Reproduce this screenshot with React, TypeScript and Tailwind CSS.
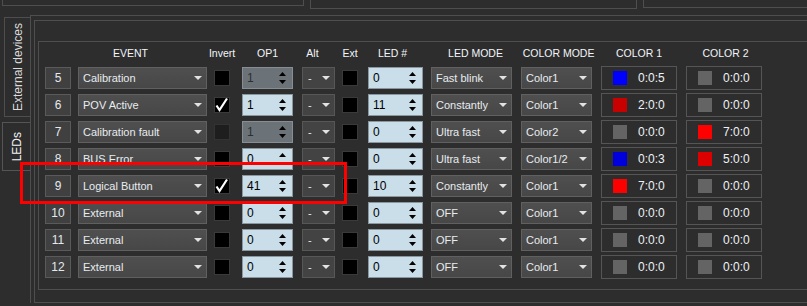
import React from "react";

type Row = {
  n: number;
  ev: string;
  inv: "off" | "on" | "dis";
  op: string;
  opDis?: boolean;
  opUp?: boolean;
  led: string;
  mode: string;
  cm: string;
  c1: string;
  t1: string;
  c2: string;
  t2: string;
};

const rows: Row[] = [
  { n: 5, ev: "Calibration", inv: "off", op: "1", opDis: true, led: "0", mode: "Fast blink", cm: "Color1", c1: "bg-[#0000ff]", t1: "0:0:5", c2: "bg-[#646464]", t2: "0:0:0" },
  { n: 6, ev: "POV Active", inv: "on", op: "1", led: "11", mode: "Constantly", cm: "Color1", c1: "bg-[#c80000]", t1: "2:0:0", c2: "bg-[#646464]", t2: "0:0:0" },
  { n: 7, ev: "Calibration fault", inv: "dis", op: "1", opDis: true, led: "0", mode: "Ultra fast", cm: "Color2", c1: "bg-[#646464]", t1: "0:0:0", c2: "bg-[#ff0000]", t2: "7:0:0" },
  { n: 8, ev: "BUS Error", inv: "off", op: "0", opUp: true, led: "0", mode: "Ultra fast", cm: "Color1/2", c1: "bg-[#0000dc]", t1: "0:0:3", c2: "bg-[#dc0000]", t2: "5:0:0" },
  { n: 9, ev: "Logical Button", inv: "on", op: "41", led: "10", mode: "Constantly", cm: "Color1", c1: "bg-[#ff0000]", t1: "7:0:0", c2: "bg-[#646464]", t2: "0:0:0" },
  { n: 10, ev: "External", inv: "off", op: "0", led: "0", mode: "OFF", cm: "Color1", c1: "bg-[#646464]", t1: "0:0:0", c2: "bg-[#646464]", t2: "0:0:0" },
  { n: 11, ev: "External", inv: "off", op: "0", led: "0", mode: "OFF", cm: "Color1", c1: "bg-[#646464]", t1: "0:0:0", c2: "bg-[#646464]", t2: "0:0:0" },
  { n: 12, ev: "External", inv: "off", op: "0", led: "0", mode: "OFF", cm: "Color1", c1: "bg-[#646464]", t1: "0:0:0", c2: "bg-[#646464]", t2: "0:0:0" },
];

function Caret() {
  return (
    <svg width="8" height="4" viewBox="0 0 8 4" className="shrink-0">
      <path d="M0 0H8L4 4Z" fill="#e2e2e2" />
    </svg>
  );
}

function Combo({ text, className, dark }: { text: string; className: string; dark?: boolean }) {
  return (
    <div
      className={`${className} h-[22px] flex items-center justify-between border pl-[4px] pr-[4px] text-[11px] text-[#e8ecf0] ${
        dark ? "bg-[#434343] border-[#575757]" : "bg-gradient-to-b from-[#4f4f4f] to-[#474747] border-[#606060]"
      }`}
    >
      <span className="whitespace-nowrap">{text}</span>
      <Caret />
    </div>
  );
}

function Spin({ value, className, disabled, upOnly }: { value: string; className: string; disabled?: boolean; upOnly?: boolean }) {
  return (
    <div
      className={`${className} h-[22px] flex items-center justify-between border pl-[4px] pr-[6px] text-[12px] ${
        disabled ? "bg-[#6b7378] border-[#868e93] text-[#2b2f32]" : "bg-[#c9dee9] border-[#8a979e] text-black"
      }`}
    >
      <span>{value}</span>
      <div className="flex flex-col gap-[4px]">
        <svg width="7" height="4" viewBox="0 0 7 4">
          <path d="M0 4H7L3.5 0Z" fill="#000" />
        </svg>
        {upOnly ? (
          <div className="h-[4px]" />
        ) : (
          <svg width="7" height="4" viewBox="0 0 7 4">
            <path d="M0 0H7L3.5 4Z" fill="#000" />
          </svg>
        )}
      </div>
    </div>
  );
}

function Check({ state, className }: { state: "off" | "on" | "dis"; className: string }) {
  return (
    <div className={`${className} w-[16px] h-[16px] border ${state === "dis" ? "bg-[#1e1e1e] border-[#333]" : "bg-black border-[#3a3a3a]"} relative`}>
      {state === "on" && (
        <svg width="16" height="16" viewBox="0 0 16 16" className="absolute -left-px -top-px">
          <polyline points="2.5,8.5 5.5,13 13,1.5" fill="none" stroke="#fff" strokeWidth="2.2" />
        </svg>
      )}
    </div>
  );
}

function ColorCell({ sw, text, className }: { sw: string; text: string; className: string }) {
  return (
    <div className={`${className} w-[76px] h-[24px] border border-[#555] flex items-center pl-[11px]`}>
      <div className={`w-[14px] h-[14px] ${sw}`} />
      <span className="ml-[11px] text-[12px] text-[#eef2f6]">{text}</span>
    </div>
  );
}

export default function App() {
  return (
    <div className="relative w-[807px] h-[306px] overflow-hidden bg-[#2d2d2d] font-['Liberation_Sans',Arial,sans-serif]">
      <div className="flex h-[15px]">
        <div className="ml-[2px] w-[302px] h-[6px] border-l border-r border-b border-[#4e4e4e]" />
        <div className="ml-[6px] w-[327px] h-[9px] border-l border-r border-b border-[#4e4e4e]" />
        <div className="ml-[6px] flex-1 h-[8px] border-l border-b border-[#4e4e4e]" />
      </div>

      <div className="flex">
        <div className="w-[30px] shrink-0 flex flex-col pt-[2px]">
          <div className="ml-[4px] w-[26px] h-[100px] border-l border-t border-b border-[#4e4e4e] flex items-center justify-center">
            <span className="[writing-mode:vertical-rl] rotate-180 text-[12px] text-[#dcdcdc] whitespace-nowrap">External devices</span>
          </div>
          <div className="mt-[5px] ml-[2px] w-[28px] h-[49px] border-l border-t border-b border-[#555] flex items-center justify-center">
            <span className="[writing-mode:vertical-rl] rotate-180 text-[12px] text-[#f2f2f2] whitespace-nowrap">LEDs</span>
          </div>
        </div>

        <div className="flex-1 border-l border-t border-[#4e4e4e] pl-[3px] pt-[4px]">
          <div className="border-l border-t border-b border-[#4e4e4e] pl-[3px] pt-[20px] pb-[12px]">
            <div className="border-l border-t border-b border-[#4e4e4e] pl-[6px] pb-[11px]">
              <div className="flex h-[25px] items-center pb-[1px] text-[10.5px] text-[#f2f5fa] whitespace-nowrap">
                <div className="w-[26px]" />
                <div className="ml-[7px] w-[129px] text-center pr-[24px]">EVENT</div>
                <div className="ml-[7px] w-[16px] flex justify-center">Invert</div>
                <div className="ml-[12px] w-[51px] text-center">OP1</div>
                <div className="ml-[9px] w-[33px] text-center pr-[12px]">Alt</div>
                <div className="ml-[7px] w-[16px] flex justify-center">Ext</div>
                <div className="ml-[10px] w-[55px] text-center pr-[6px]">LED #</div>
                <div className="ml-[8px] w-[81px] text-center pl-[8px]">LED MODE</div>
                <div className="ml-[9px] w-[71px] flex justify-center pl-[4px]">COLOR MODE</div>
                <div className="ml-[9px] w-[76px] text-center">COLOR 1</div>
                <div className="ml-[9px] w-[76px] text-center pl-[3px]">COLOR 2</div>
              </div>

              <div className="flex flex-col gap-[5px]">
                {rows.map((r) => (
                  <div key={r.n} className="flex h-[22px] items-center">
                    <div className="w-[26px] h-[22px] bg-[#404040] border border-[#5a5a5a] flex items-center justify-center text-[12px] text-[#e4e9ef]">
                      {r.n}
                    </div>
                    <Combo className="ml-[7px] w-[129px]" text={r.ev} />
                    <Check className="ml-[7px]" state={r.inv} />
                    <Spin className="ml-[12px] w-[51px]" value={r.op} disabled={r.opDis} upOnly={r.opUp} />
                    <Combo className="ml-[9px] w-[33px] pl-[5px]" text="-" dark />
                    <Check className="ml-[7px]" state="off" />
                    <Spin className="ml-[10px] w-[55px]" value={r.led} />
                    <Combo className="ml-[8px] w-[81px]" text={r.mode} />
                    <Combo className="ml-[9px] w-[71px]" text={r.cm} />
                    <ColorCell className="ml-[9px]" sw={r.c1} text={r.t1} />
                    <ColorCell className="ml-[9px]" sw={r.c2} text={r.t2} />
                  </div>
                ))}
              </div>
            </div>
          </div>
        </div>
      </div>

      <div className="absolute left-[20px] top-[162px] w-[327px] h-[42px] border-[3px] border-[#ff0000]" />
    </div>
  );
}
